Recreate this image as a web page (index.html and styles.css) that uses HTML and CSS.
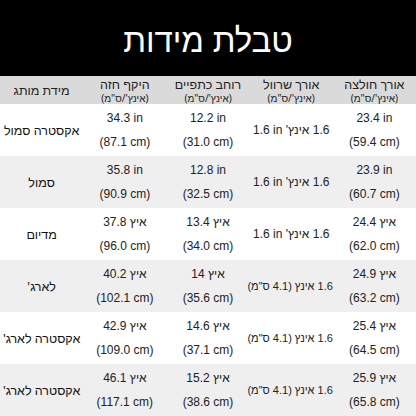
FILE: index.html
```html
<!DOCTYPE html>
<html lang="he" dir="rtl">
<head>
<meta charset="utf-8">
<link rel="stylesheet" href="styles.css">
</head>
<body>
<div class="page">
  <header class="banner"><h1 class="title">טבלת מידות</h1></header>
  <table class="sizes">
    <colgroup><col><col><col><col><col></colgroup>
    <thead>
      <tr>
        <th><span class="h-main">אורך חולצה</span><span class="h-unit">(אינץ'/ס"מ)</span></th>
        <th><span class="h-main">אורך שרוול</span><span class="h-unit">(אינץ'/ס"מ)</span></th>
        <th><span class="h-main">רוחב כתפיים</span><span class="h-unit">(אינץ'/ס"מ)</span></th>
        <th><span class="h-main">היקף חזה</span><span class="h-unit">(אינץ'/ס"מ)</span></th>
        <th><span class="h-main">מידת מותג</span></th>
      </tr>
    </thead>
    <tbody>
      <tr>
        <td><span class="v" dir="ltr">23.4 in</span><span class="v" dir="ltr">(59.4 cm)</span></td>
        <td><span class="v">1.6 אינץ' <bdi dir="ltr">1.6 in</bdi></span></td>
        <td><span class="v" dir="ltr">12.2 in</span><span class="v" dir="ltr">(31.0 cm)</span></td>
        <td><span class="v" dir="ltr">34.3 in</span><span class="v" dir="ltr">(87.1 cm)</span></td>
        <td class="size">אקסטרה סמול</td>
      </tr>
      <tr>
        <td><span class="v" dir="ltr">23.9 in</span><span class="v" dir="ltr">(60.7 cm)</span></td>
        <td><span class="v">1.6 אינץ' <bdi dir="ltr">1.6 in</bdi></span></td>
        <td><span class="v" dir="ltr">12.8 in</span><span class="v" dir="ltr">(32.5 cm)</span></td>
        <td><span class="v" dir="ltr">35.8 in</span><span class="v" dir="ltr">(90.9 cm)</span></td>
        <td class="size">סמול</td>
      </tr>
      <tr>
        <td><span class="v">איץ 24.4</span><span class="v" dir="ltr">(62.0 cm)</span></td>
        <td><span class="v">1.6 אינץ' <bdi dir="ltr">1.6 in</bdi></span></td>
        <td><span class="v">איץ 13.4</span><span class="v" dir="ltr">(34.0 cm)</span></td>
        <td><span class="v">איץ 37.8</span><span class="v" dir="ltr">(96.0 cm)</span></td>
        <td class="size">מדיום</td>
      </tr>
      <tr>
        <td><span class="v">איץ 24.9</span><span class="v" dir="ltr">(63.2 cm)</span></td>
        <td><span class="v small">1.6 אינץ (4.1 ס"מ)</span></td>
        <td><span class="v">איץ 14</span><span class="v" dir="ltr">(35.6 cm)</span></td>
        <td><span class="v">איץ 40.2</span><span class="v" dir="ltr">(102.1 cm)</span></td>
        <td class="size">לארג'</td>
      </tr>
      <tr>
        <td><span class="v">איץ 25.4</span><span class="v" dir="ltr">(64.5 cm)</span></td>
        <td><span class="v small">1.6 אינץ (4.1 ס"מ)</span></td>
        <td><span class="v">איץ 14.6</span><span class="v" dir="ltr">(37.1 cm)</span></td>
        <td><span class="v">איץ 42.9</span><span class="v" dir="ltr">(109.0 cm)</span></td>
        <td class="size">אקסטרה לארג'</td>
      </tr>
      <tr>
        <td><span class="v">איץ 25.9</span><span class="v" dir="ltr">(65.8 cm)</span></td>
        <td><span class="v small">1.6 אינץ (4.1 ס"מ)</span></td>
        <td><span class="v">איץ 15.2</span><span class="v" dir="ltr">(38.6 cm)</span></td>
        <td><span class="v">איץ 46.1</span><span class="v" dir="ltr">(117.1 cm)</span></td>
        <td class="size">אקסטרה לארג'</td>
      </tr>
    </tbody>
  </table>
</div>
</body>
</html>
```
FILE: styles.css
```css
html, body {
  margin: 0;
  padding: 0;
  background: #ffffff;
}
.page {
  width: 416px;
  height: 416px;
  overflow: hidden;
  display: flex;
  flex-direction: column;
}
.banner {
  background: #000000;
  height: 76px;
  flex: none;
  display: flex;
  align-items: center;
  justify-content: center;
}
.title {
  margin: 0;
  padding-top: 2px;
  color: #ffffff;
  font-family: "Noto Sans", sans-serif;
  font-weight: 400;
  font-size: 33px;
  line-height: 1;
}
.sizes {
  width: 416px;
  table-layout: fixed;
  border-collapse: collapse;
  border-spacing: 0;
  font-family: "Liberation Sans", Arial, sans-serif;
}
.sizes col {
  width: 20%;
}
.sizes th {
  background: #dadada;
  height: 28px;
  padding: 0;
  font-weight: 400;
  color: #222222;
  text-align: center;
  vertical-align: middle;
  white-space: nowrap;
  font-family: "Noto Sans", sans-serif;
}
.h-main {
  display: block;
  font-size: 12.5px;
  line-height: 15px;
}
.h-unit {
  display: block;
  font-size: 10px;
  line-height: 12px;
}
.sizes td {
  height: 52px;
  padding: 0;
  text-align: center;
  vertical-align: middle;
  color: #222222;
  font-size: 12px;
  white-space: nowrap;
}
.sizes tbody tr:nth-child(even) td {
  background: #efefef;
}
.v {
  display: block;
  line-height: 24px;
}
.v.small {
  font-size: 11px;
}
.sizes td.size {
  font-family: "Noto Sans", sans-serif;
  font-size: 12.5px;
  color: #111111;
}
```
